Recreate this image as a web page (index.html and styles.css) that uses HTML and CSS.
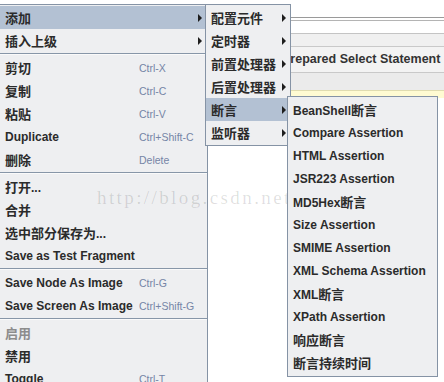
FILE: index.html
```html
<!DOCTYPE html>
<html>
<head>
<meta charset="utf-8">
<link rel="stylesheet" href="styles.css">
</head>
<body>
<div class="app">
  <div class="app-left"></div>
  <div class="app-right">
    <div class="r-top"></div>
    <div class="r-line dark"></div>
    <div class="r-gap2"></div>
    <div class="r-line"></div>
    <div class="r-gap12"></div>
    <div class="r-line light"></div>
    <div class="r-gray"></div>
    <div class="r-field">Prepared Select Statement</div>
    <div class="r-gray2"></div>
    <div class="r-yellow"></div>
    <div class="r-white"></div>
  </div>
</div>

<div class="menu main">
  <div class="item active"><span class="label zh">添加</span><span class="arrow"></span></div>
  <div class="item"><span class="label zh">插入上级</span><span class="arrow"></span></div>
  <div class="sep"></div>
  <div class="item"><span class="label zh">剪切</span><span class="key">Ctrl-X</span></div>
  <div class="item"><span class="label zh">复制</span><span class="key">Ctrl-C</span></div>
  <div class="item"><span class="label zh">粘贴</span><span class="key">Ctrl-V</span></div>
  <div class="item"><span class="label">Duplicate</span><span class="key">Ctrl+Shift-C</span></div>
  <div class="item"><span class="label zh">删除</span><span class="key">Delete</span></div>
  <div class="sep"></div>
  <div class="item"><span class="label"><span class="zh">打开</span>...</span></div>
  <div class="item"><span class="label zh">合并</span></div>
  <div class="item"><span class="label"><span class="zh">选中部分保存为</span>...</span></div>
  <div class="item"><span class="label">Save as Test Fragment</span></div>
  <div class="sep"></div>
  <div class="item"><span class="label">Save Node As Image</span><span class="key">Ctrl-G</span></div>
  <div class="item"><span class="label">Save Screen As Image</span><span class="key">Ctrl+Shift-G</span></div>
  <div class="sep"></div>
  <div class="item disabled"><span class="label zh">启用</span></div>
  <div class="item"><span class="label zh">禁用</span></div>
  <div class="item"><span class="label">Toggle</span><span class="key">Ctrl-T</span></div>
</div>

<div class="menu sub1">
  <div class="item"><span class="label zh">配置元件</span><span class="arrow"></span></div>
  <div class="item"><span class="label zh">定时器</span><span class="arrow"></span></div>
  <div class="item"><span class="label zh">前置处理器</span><span class="arrow"></span></div>
  <div class="item"><span class="label zh">后置处理器</span><span class="arrow"></span></div>
  <div class="item active"><span class="label zh">断言</span><span class="arrow"></span></div>
  <div class="item"><span class="label zh">监听器</span><span class="arrow"></span></div>
</div>

<div class="watermark">http://blog.csdn.net</div>

<div class="menu sub2">
  <div class="item"><span class="label">BeanShell<span class="zh">断言</span></span></div>
  <div class="item"><span class="label">Compare Assertion</span></div>
  <div class="item"><span class="label">HTML Assertion</span></div>
  <div class="item"><span class="label">JSR223 Assertion</span></div>
  <div class="item"><span class="label">MD5Hex<span class="zh">断言</span></span></div>
  <div class="item"><span class="label">Size Assertion</span></div>
  <div class="item"><span class="label">SMIME Assertion</span></div>
  <div class="item"><span class="label">XML Schema Assertion</span></div>
  <div class="item"><span class="label">XML<span class="zh">断言</span></span></div>
  <div class="item"><span class="label">XPath Assertion</span></div>
  <div class="item"><span class="label zh">响应断言</span></div>
  <div class="item"><span class="label zh">断言持续时间</span></div>
</div>
</body>
</html>
```
FILE: styles.css
```css
html, body {
  margin: 0;
  padding: 0;
  background: #ffffff;
  overflow: hidden;
}
body {
  width: 444px;
  height: 382px;
  position: relative;
  font-family: "Liberation Sans", "Noto Sans CJK SC", sans-serif;
}
.app {
  display: flex;
  width: 444px;
  height: 382px;
}
.app-left {
  width: 290px;
  background: #ffffff;
}
.app-right {
  flex: 1;
  display: flex;
  flex-direction: column;
}
.r-top { height: 17px; background: #fff; }
.r-line { height: 1px; background: #b4b4b4; }
.r-line.dark { background: #9a9a9a; }
.r-line.light { background: #c4c4c4; }
.r-gap2 { height: 2px; background: #fff; }
.r-gap12 { height: 12px; background: #fff; }
.r-gray { height: 12px; background: #f0f0f0; }
.r-field {
  height: 25px;
  border-top: 1px solid #c9c9c9;
  border-bottom: 1px solid #c9c9c9;
  background: #f3f3f3;
  font-weight: bold;
  font-size: 12.5px;
  color: #333;
  line-height: 25px;
  margin-left: -8px;
  white-space: nowrap;
  overflow: hidden;
}
.r-gray2 { height: 17px; background: #ebebeb; }
.r-yellow {
  height: 7px;
  background: #fffbd2;
  border-top: 1px solid #e0dcb0;
}
.r-white { flex: 1; background: #fff; }

.menu {
  position: absolute;
  background: #eeeff1;
  border: 1px solid #8593a5;
  color: #2b2b2b;
  font-weight: bold;
  font-size: 12px;
}
.main {
  left: -1px;
  top: 4px;
  width: 207px;
  height: 400px;
  padding-top: 1px;
  z-index: 1;
}
.sub1 {
  left: 205px;
  top: 4px;
  width: 84px;
  padding-top: 1px;
  padding-bottom: 1px;
  z-index: 2;
}
.sub2 {
  left: 287px;
  top: 96px;
  width: 149px;
  padding-top: 1px;
  padding-bottom: 2px;
  z-index: 4;
}
.item {
  height: 23px;
  display: flex;
  align-items: center;
  padding-left: 5px;
  white-space: nowrap;
}
.item.active {
  background: #b3c1d3;
}
.item.disabled .label {
  color: #8c8c8c;
}
.label {
  font-family: "Liberation Sans", "Noto Sans CJK SC", sans-serif;
  font-size: 12px;
}
.zh {
  font-family: "Noto Sans CJK SC", sans-serif;
  font-size: 13px;
}
.main .label {
  width: 134px;
}
.key {
  font-weight: normal;
  font-size: 10.5px;
  color: #7585a6;
}
.arrow {
  margin-left: auto;
  margin-right: 5px;
  width: 0;
  height: 0;
  border-left: 4px solid #1e1e1e;
  border-top: 4px solid transparent;
  border-bottom: 4px solid transparent;
}
.sub1 .arrow {
  margin-right: 4px;
}
.sep {
  height: 4px;
  display: flex;
  flex-direction: column;
  justify-content: center;
}
.sep::before {
  content: "";
  display: block;
  height: 1px;
  background: #8796a8;
}
.sep::after {
  content: "";
  display: block;
  height: 1px;
  background: #fafafa;
}
.watermark {
  position: absolute;
  left: 97px;
  top: 187px;
  font-family: "Liberation Serif", serif;
  font-size: 19px;
  letter-spacing: 2.4px;
  color: rgba(0, 0, 0, 0.13);
  z-index: 3;
  white-space: nowrap;
}
```
